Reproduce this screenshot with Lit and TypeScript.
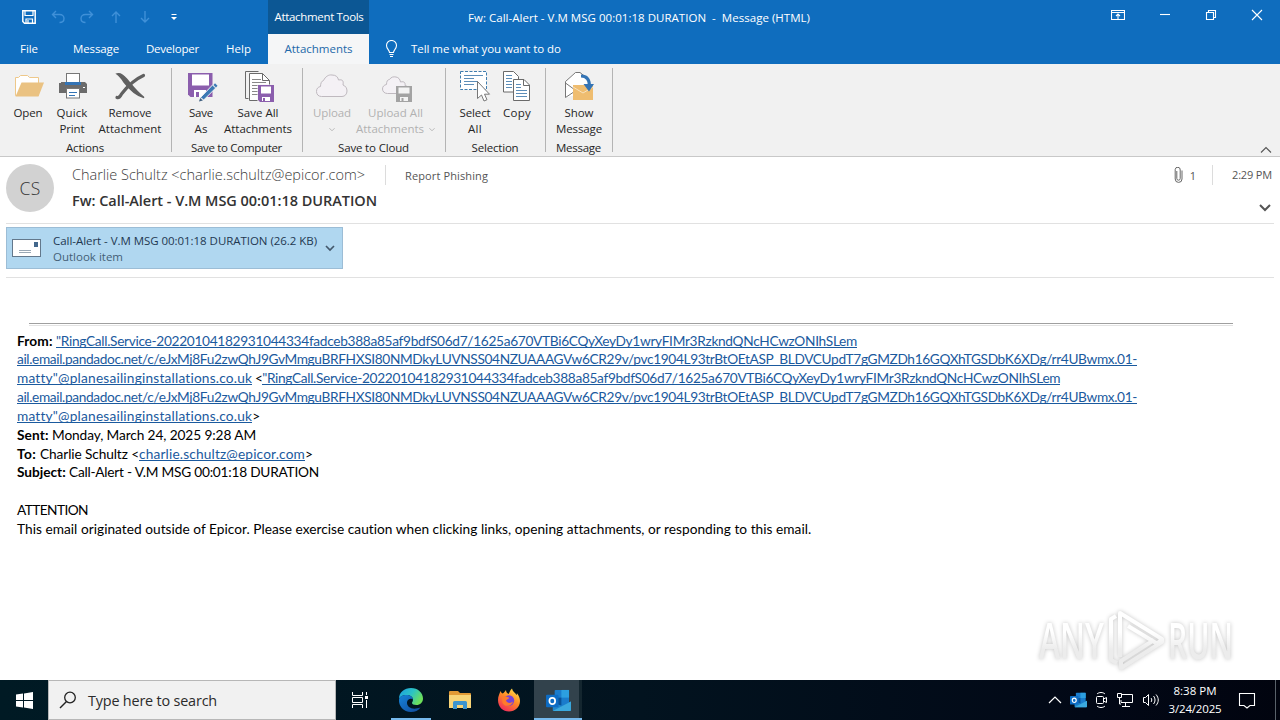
import { LitElement, css, html, svg } from 'lit';
import { customElement, property } from 'lit/decorators.js';

// One run of text, spaced out so that it takes up a known width.
@customElement('text-run')
export class TextRun extends LitElement {
    @property({ type: Number }) w = 0;

    firstUpdated() {
        const run = this.renderRoot.querySelector('.run') as HTMLElement;
        const count = (this.textContent || '').length;
        if (!this.w || !count) return;
        const natural = run.getBoundingClientRect().width;
        run.style.letterSpacing = `${(this.w - natural) / count}px`;
    }

    render() {
        return html`<span class="run"><slot></slot></span>`;
    }

    static styles = css`
    :host {
      display: inline-block;
      white-space: pre;
    }
    .run {
      display: inline-block;
    }
  `;
}

const page = (x: number, y: number) => svg`
  <path d="M${x} ${y}h13l7 7v20h-20z" fill="#fff" stroke="#6a6a6a"/>
  <path d="M${x + 13} ${y}v7h7" fill="none" stroke="#6a6a6a"/>`;

// Ribbon icons share the coordinates of the ribbon they sit in.
const ribbonIcons: Record<string, unknown> = {
    open: svg`
      <path d="M15.500 95.500v-18h3l2-2h7l2 2h9v18z" fill="#fff" stroke="#eec88a"/>
      <path d="M15.500 96.500l6-14h22.500l-5.500 14z" fill="#eac282"/>`,
    print: svg`
      <path d="M61 83v-1h24l2 2v9h-28v-10z" fill="#6b6b6b"/>
      <rect x="66.500" y="73.500" width="13" height="10" fill="#fff" stroke="#777"/>
      <path d="M65 83.500h16" stroke="#3474b5" stroke-width="3"/>
      <rect x="66.500" y="88.500" width="13" height="9.500" fill="#fff" stroke="#777"/>
      <path d="M69 92.500h8M69 95.500h6" stroke="#3474b5"/>
      <path d="M83 87.500h2" stroke="#fff"/>`,
    remove: svg`
      <path d="M117 74c4-1.500 7 2 9.500 5 5 6 10 13 17.500 18.500-8-2-15-9-20-15.500-2-3-4-6-7-8z" fill="#606060" stroke="#606060" stroke-width="1.500"/>
      <path d="M143.500 75.500c-9 4-17 12-22 18.500-1 2-3 4-4.500 3.500" fill="none" stroke="#606060" stroke-width="3.200" stroke-linecap="round"/>`,
    saveAs: svg`
      <path d="M188 73h24.500v24h-22l-2.500-2.500z" fill="#8b5ead"/>
      <rect x="192" y="74.500" width="17" height="11" fill="#fff"/>
      <rect x="194" y="90" width="12" height="7" fill="#fff"/>
      <rect x="196" y="92" width="3" height="5" fill="#8b5ead"/>
      <path d="M200.500 97.500l12-12.500 3.200 3-12 12z" fill="#3c79b4" stroke="#f1f1f1"/>
      <path d="M213.500 85l1.500-1.700 2.500 2.500-1.500 1.700z" fill="#3c79b4"/>
      <path d="M199 101.500l1.200-3.500 2.700 2.500z" fill="#3f5f80"/>`,
    saveAll: svg`
      <path d="M245.500 71.500h13M245.500 71.500v27h3" fill="none" stroke="#6a6a6a"/>
      ${page(249.5, 73.5)}
      <path d="M252 79.500h9M252 82.500h14M252 85.500h14M252 88.500h7M252 91.500h7M252 94.500h7" stroke="#888"/>
      <rect x="257.500" y="84.500" width="17" height="18" fill="#f1f1f1"/>
      <path d="M258 85h16v17h-14l-2-2z" fill="#8b5ead"/>
      <rect x="261" y="86.500" width="10" height="7" fill="#fff"/>
      <rect x="262" y="97" width="8" height="4" fill="#fff"/>
      <rect x="263" y="98" width="2" height="3" fill="#8b5ead"/>`,
    upload: svg`
      <path d="M321.500 96.500c-3 0-5-2-5-5 0-3 1.500-4.500 4-5 0-3 1-5.500 3-6 2-4 5-6 8.500-5.500 4 0 6 2 6.500 5 5-1 5 2 4.500 5 2.500 1 4 3 4 6 0 3-2 5.500-5 5.500z" fill="#f4f1f5" stroke="#bfb9bf"/>`,
    uploadAll: svg`
      <path d="M387.500 93.500c-3 0-5-2-5-4.500s1.500-4 4-4.500c0-3 1-5 3-5 1.500-2.500 4-3 6.500-2.500s4 2 4.500 5c4-1 5 1 4.500 3.500 3 1 4 2 4 5 0 2-1 3-2 3z" fill="#f4f1f5" stroke="#bfb9bf"/>
      <path d="M396 86h16v16h-16z" fill="#a3a3a3"/>
      <path d="M398.500 87.500h11v6h-11z" fill="#f4f4f4"/>
      <path d="M400 97h8v4h-8z" fill="#f4f4f4"/>
      <path d="M401.500 98h2v3h-2z" fill="#a3a3a3"/>`,
    select: svg`
      <rect x="460.500" y="71.500" width="26" height="18" fill="#fff" stroke="#3f7cae" stroke-dasharray="3 1.500"/>
      <path d="M464 75.500h19M464 78.500h10M464 81.500h14M464 84.500h10" stroke="#5c8db8"/>
      <path d="M477.500 81.500v17l4-3.500 2.500 6 3-1.300-2.500-5.500h5z" fill="#fff" stroke="#777"/>`,
    copy: svg`
      <path d="M503.500 71.500h10l5 5v15.500h-15z" fill="#fff" stroke="#6a6a6a"/>
      <path d="M506 75.500h6M506 78.500h6M506 81.500h6M506 84.500h6M506 87.500h6" stroke="#5c8db8"/>
      <path d="M513.500 79.500h10.500l5.500 5.500v15.500h-16z" fill="#fff" stroke="#6a6a6a"/>
      <path d="M523.500 79.500v6h6" fill="none" stroke="#6a6a6a"/>
      <path d="M516 84.500h5M516 87.500h5M516 90.500h11M516 93.500h11M516 96.500h11" stroke="#5c8db8"/>`,
    show: svg`
      <path d="M565.500 97.500v-16l8.500-8.500 5-0.500 8 8v12z" fill="#fff"/>
      <path d="M573 92.500l-7.500 5v-16l10-9 4.500 0 5 4M565.500 83l7.500 5.500" fill="none" stroke="#777"/>
      <rect x="573" y="85" width="20" height="15" fill="#efbd70"/>
      <path d="M573 87l10 6 10-6" fill="none" stroke="#f8e2bd"/>
      <path d="M581 76c6 0 8.500 4 8.500 10" fill="none" stroke="#3474b5" stroke-width="3"/>
      <path d="M583.500 84h10.500l-5 7.500z" fill="#3474b5"/>`,
};

interface Command {
    icon: string;
    x: number;
    width: number;
    lines: [string, number][];
    disabled?: boolean;
    arrow?: boolean;
}

interface Group {
    name: string;
    nameWidth: number;
    width: number;
    pad: number;
    commands: Command[];
}

const groups: Group[] = [
    {
        name: 'Actions', nameWidth: 38, width: 172, pad: 6,
        commands: [
            { icon: 'open', x: 6, width: 44, lines: [['Open', 29]] },
            { icon: 'print', x: 50, width: 44, lines: [['Quick', 31], ['Print', 25]] },
            { icon: 'remove', x: 94, width: 72, lines: [['Remove', 43], ['Attachment', 63]] },
        ],
    },
    {
        name: 'Save to Computer', nameWidth: 91, width: 131, pad: 7,
        commands: [
            { icon: 'saveAs', x: 179, width: 44, lines: [['Save', 24], ['As', 13]] },
            { icon: 'saveAll', x: 223, width: 70, lines: [['Save All', 41], ['Attachments', 68]] },
        ],
    },
    {
        name: 'Save to Cloud', nameWidth: 71, width: 143, pad: 7,
        commands: [
            { icon: 'upload', x: 310, width: 44, lines: [['Upload', 38], ['', 0]], disabled: true, arrow: true },
            { icon: 'uploadAll', x: 354, width: 83, lines: [['Upload All', 55], ['Attachments', 68]], disabled: true, arrow: true },
        ],
    },
    {
        name: 'Selection', nameWidth: 47, width: 100, pad: 7,
        commands: [
            { icon: 'select', x: 453, width: 44, lines: [['Select', 31], ['All', 14]] },
            { icon: 'copy', x: 497, width: 40, lines: [['Copy', 28]] },
        ],
    },
    {
        name: 'Message', nameWidth: 45, width: 67, pad: 7,
        commands: [
            { icon: 'show', x: 553, width: 52, lines: [['Show', 29], ['Message', 46]] },
        ],
    },
];

const arrow = html`<svg class="arrow" width="6" height="5" viewBox="0 0 7 5"><path d="M.5 1l3 3 3-3" fill="none" stroke="currentColor"/></svg>`;

const outlook = svg`
  <rect x="9" y="1" width="15" height="17" rx="1" fill="#1a7ccc"/>
  <path d="M16 1h8v8h-8z" fill="#2c9fe0"/>
  <path d="M9 9h7v8H9z" fill="#0a5398"/>
  <path d="M7 13l9 5 10-5v9a1 1 0 0 1-1 1H8a1 1 0 0 1-1-1z" fill="#1f86cc"/>
  <path d="M7 23l19-10v9a1 1 0 0 1-1 1z" fill="#3ba9de"/>
  <rect x="0" y="6" width="13" height="13" rx="1" fill="#0d6cc4"/>
  <ellipse cx="6.500" cy="12.500" rx="3" ry="3.300" fill="none" stroke="#fff" stroke-width="1.800"/>`;

@customElement('mail-ribbon')
export class MailRibbon extends LitElement {
    renderCommand(c: Command) {
        return html`
      <div class="command ${c.disabled ? 'disabled' : ''}" style="width:${c.width}px">
        <svg class="icon" width="${c.width}" height="34" viewBox="${c.x} 70 ${c.width} 34">${ribbonIcons[c.icon]}</svg>
        ${c.lines.map(([text, w], i) => html`
          <div class="line">
            ${text ? html`<text-run w="${w}">${text}</text-run>` : ''}
            ${c.arrow && i === 1 ? arrow : ''}
          </div>`)}
      </div>`;
    }

    render() {
        return html`
      ${groups.map((g) => html`
        <div class="group" style="width:${g.width}px">
          <div class="commands" style="padding-left:${g.pad}px">${g.commands.map((c) => this.renderCommand(c))}</div>
          <div class="name"><text-run w="${g.nameWidth}">${g.name}</text-run></div>
        </div>`)}
      <svg class="collapse" width="12" height="8" viewBox="0 0 12 8"><path d="M1 6.500l5-5 5 5" fill="none" stroke="#555" stroke-width="1.100"/></svg>
    `;
    }

    static styles = css`
    :host {
      display: flex;
      box-sizing: border-box;
      height: 93px;
      padding-top: 4px;
      background: #f1f1f1;
      border-bottom: 1px solid #c8c8c8;
      color: #262626;
      font-size: 11.5px;
    }
    .group {
      box-sizing: border-box;
      height: 84px;
      border-right: 1px solid #b4b4b4;
      display: flex;
      flex-direction: column;
    }
    .commands {
      display: flex;
      flex: none;
      height: 72px;
      padding-top: 2px;
      box-sizing: border-box;
    }
    .command {
      display: flex;
      flex-direction: column;
      align-items: center;
    }
    .icon {
      flex: none;
      margin-bottom: 1px;
    }
    .line {
      display: flex;
      align-items: center;
      gap: 5px;
      height: 16px;
      line-height: 16px;
    }
    .disabled {
      color: #b1b1b1;
    }
    .name {
      flex: none;
      text-align: center;
      line-height: 16px;
      padding-right: 1px;
    }
    .collapse {
      margin: 78px 8px 0 auto;
    }
  `;
}

@customElement('task-bar')
export class TaskBar extends LitElement {
    render() {
        return html`
      <div class="start">
        <svg width="17" height="17" viewBox="0 0 17 17"><path d="M0 2.500l7-1v6.500H0zM8 1.400L17 0v8H8zM0 9h7v6.500l-7-1zM8 9h9v8l-9-1.400z" fill="#fff"/></svg>
      </div>
      <div class="search">
        <svg width="18" height="18" viewBox="0 0 18 18"><circle cx="11" cy="6.500" r="5.300" fill="none" stroke="#222" stroke-width="1.300"/><path d="M7.500 10.500L1 17" stroke="#222" stroke-width="1.400"/></svg>
        <text-run w="129">Type here to search</text-run>
      </div>
      <div class="app view">
        <svg width="18" height="18" viewBox="0 0 18 18" fill="none" stroke="#fff"><path d="M1.500 1v3.500h10V1M1.500 17v-3.500h10V17M1.500 6.500h10v5h-10zM15.500 1v3M15.500 9v8"/><path d="M14 6.500h3" stroke-width="3"/></svg>
      </div>
      <div class="app running">
        <svg width="26" height="26" viewBox="0 0 26 26">
          <defs>
            <linearGradient id="edge" x1="0" x2="1" y1="0" y2=".5"><stop offset="0" stop-color="#1b9de2"/><stop offset=".55" stop-color="#2cc3c4"/><stop offset="1" stop-color="#6de05a"/></linearGradient>
            <linearGradient id="deep" x1="0" x2="1" y1="0" y2="1"><stop offset="0" stop-color="#1683d8"/><stop offset="1" stop-color="#114a9c"/></linearGradient>
          </defs>
          <path d="M1 12C1 5 6.500 1 13 1c7 0 12 5 12 10.500 0 4-3 6.500-6.500 6.500-3 0-4.500-1-4.500-2s1-1.500 1-3.500c0-2.500-3-4.500-6.500-4.500S2 9.500 1 12z" fill="url(#edge)"/>
          <path d="M1 12.500C2 9 5 8 8.500 8 12 8 15 10 15 12.500c-1-1.500-6-1-6 3.500 0 4 5 7.500 13.500 4.500C20.500 23.500 17 25 13 25 5.500 25 .5 19 1 12.500z" fill="url(#deep)"/>
        </svg>
      </div>
      <div class="app">
        <svg width="22" height="20" viewBox="0 0 22 20"><path d="M0 2a1 1 0 0 1 1-1h8l2 2h10a1 1 0 0 1 1 1v14H0z" fill="#e29a35"/><path d="M0 5h22v13H0z" fill="#f8d477"/><path d="M4 19v-6.500a1.500 1.500 0 0 1 1.500-1.500h11a1.500 1.500 0 0 1 1.500 1.500V19h-4v-4H8v4z" fill="#3c94cf"/></svg>
      </div>
      <div class="app">
        <svg width="24" height="24" viewBox="0 0 24 24">
          <defs><linearGradient id="fox" x1=".8" x2=".2" y1="0" y2="1"><stop offset="0" stop-color="#ffe14a"/><stop offset=".45" stop-color="#ff8a26"/><stop offset="1" stop-color="#f0245f"/></linearGradient></defs>
          <path d="M1 12C1 8 2.500 6 3.500 3c.5 1 1 2 2 2.500C7 5 8 3 9 2c0 2 1 3 2.500 4C13 4 13 2 15 .5c.5 3 3 4 4.500 6.500.5-.5.500-1 .3-2C22 8 23 10 23 13c0 6-5 10.500-11 10.500S1 19 1 12z" fill="url(#fox)"/>
          <circle cx="12" cy="12.500" r="5.200" fill="#7543d8"/>
          <path d="M5 9c3-2 5 0 7 .5 1 1.500-2 1.500-3 3 1 3 5 3 7 1-1 5-8 6-10.500 1.500z" fill="#ff7b2c"/>
        </svg>
      </div>
      <div class="app running active"><svg width="25" height="23" viewBox="0 0 26 24">${outlook}</svg></div>
      <div class="tray">
        <svg width="14" height="8" viewBox="0 0 14 8"><path d="M1 7l6-6 6 6" fill="none" stroke="#fff" stroke-width="1.200"/></svg>
        <svg width="17" height="16" viewBox="0 0 26 24">${outlook}</svg>
        <svg width="14" height="18" viewBox="0 0 14 18" fill="none" stroke="#fff"><rect x="1.500" y="5.500" width="7" height="7" rx="1"/><path d="M8.500 8l3-1.500v5l-3-1.500M2 3c2-2 6-2 8 0M2 15c2 2 6 2 8 0"/></svg>
        <svg width="18" height="16" viewBox="0 0 18 16" fill="none" stroke="#fff"><path d="M6 2.500h10.500v8H5V8M9.500 10.500v4M6 14.500h8"/><path d="M1.500 1.500h4v4h-4zM3.500 5.500V12H5"/></svg>
        <svg width="18" height="16" viewBox="0 0 18 16" fill="none" stroke="#fff"><path d="M1.500 5.500h2l3-3v11l-3-3h-2zM9 6c1 1 1 3 0 4M11.500 4c2 2.500 2 5.500 0 8M14 2.500c3 3.500 3 7.500 0 11"/></svg>
      </div>
      <div class="clock">
        <text-run w="43">8:38 PM</text-run>
        <text-run w="53">3/24/2025</text-run>
      </div>
      <svg class="notes" width="18" height="17" viewBox="0 0 18 17"><path d="M1.500 1.500h15v12H12l-3 2.500-3-2.500H1.500z" fill="none" stroke="#fff" stroke-width="1.100"/></svg>
      <div class="desktop"></div>
    `;
    }

    static styles = css`
    :host {
      display: flex;
      height: 40px;
      background: linear-gradient(90deg, #001a24, #02131f 50%, #020816 85%, #01040f);
      color: #fff;
    }
    .start {
      width: 48px;
      display: grid;
      place-items: center;
    }
    .search {
      box-sizing: border-box;
      width: 288px;
      display: flex;
      align-items: center;
      gap: 11px;
      padding-left: 10px;
      background: #f1f1f1;
      border: 1px solid #b7b7b7;
      color: #2b2b2b;
      font-size: 14.4px;
    }
    .app {
      box-sizing: border-box;
      width: 49px;
      display: grid;
      place-items: center;
    }
    .view {
      width: 50px;
      padding-right: 2px;
    }
    .running {
      background: linear-gradient(#76b9ed, #76b9ed) center bottom / 40px 2px no-repeat;
    }
    .active {
      width: 48px;
      margin-left: 1px;
      background: linear-gradient(#76b9ed, #76b9ed) center bottom / 48px 2px no-repeat,
        linear-gradient(90deg, #32424c 45px, #14262f 45px);
    }
    .tray {
      display: flex;
      align-items: center;
      gap: 7.7px;
      margin-left: auto;
    }
    .clock {
      width: 70px;
      display: flex;
      flex-direction: column;
      align-items: center;
      padding-top: 2px;
      font-size: 11.5px;
      line-height: 18px;
    }
    .notes {
      margin: 12px 0 0 8px;
    }
    .desktop {
      margin-left: 19px;
      width: 4px;
      border-left: 1px solid #59616a;
    }
  `;
}

const service = '"RingCall.Service-20220104182931044334fadceb388a85af9bdfS06d7/1625a670VTBi6CQyXeyDy1wryFIMr3RzkndQNcHCwzONIhSLem';
const route = 'ail.email.pandadoc.net/c/eJxMj8Fu2zwQhJ9GvMmguBRFHXSI80NMDkyLUVNSS04NZUAAAGVw6CR29v/pvc1904L93trBtOEtASP_BLDVCUpdT7gGMZDh16GQXhTGSDbK6XDg/rr4UBwmx.01-';
const matty = 'matty"@planesailinginstallations.co.uk';

@customElement('app-root')
export class AppRoot extends LitElement {
    render() {
        return html`
      <header class="titlebar">
        <div class="quick">
          <svg width="14" height="14" viewBox="0 0 14 14"><path d="M.8.8h12.400v12.400H2.500L.8 11.500z" fill="none" stroke="#fff" stroke-width="1.500"/><path d="M3 1v4.500h8V1M4 13V9h6.500v4M6 10v3" fill="none" stroke="#fff" stroke-width="1.200"/></svg>
          <svg class="dim" width="14" height="14" viewBox="0 0 14 14"><path d="M5 1L1.500 4.500 5 8M2 4.500h6.500c3 0 4.500 2 4.500 4s-1.500 4-4.500 4"/></svg>
          <svg class="dim" width="14" height="14" viewBox="0 0 14 14"><path d="M9 1l3.500 3.500L9 8M12 4.500H5.500C2.500 4.500 1 6.500 1 8.500s1.500 4 4.500 4"/></svg>
          <svg class="dim" width="14" height="14" viewBox="0 0 14 14"><path d="M7 13V2M3 6l4-4 4 4"/></svg>
          <svg class="dim" width="14" height="14" viewBox="0 0 14 14"><path d="M7 1v11M3 8l4 4 4-4"/></svg>
          <svg width="14" height="14" viewBox="0 0 14 14"><path d="M4.500 4.500h5" stroke="#fff"/><path d="M4 7h6l-3 3z" fill="#fff"/></svg>
        </div>
        <div class="tools"><text-run w="89">Attachment Tools</text-run></div>
        <div class="caption"><text-run w="342">Fw: Call-Alert - V.M MSG 00:01:18 DURATION  -  Message (HTML)</text-run></div>
        <div class="window">
          <svg width="14" height="12" viewBox="0 0 14 12"><path d="M.5 1.500h13v9H.500zM.5 3.500h13M7 10V5M5 7l2-2 2 2"/></svg>
          <svg width="12" height="12" viewBox="0 0 12 12"><path d="M1 5.500h10"/></svg>
          <svg width="12" height="12" viewBox="0 0 12 12"><path d="M1.500 3.500h7v7h-7zM3.500 3V1.500h7v7H9"/></svg>
          <svg width="12" height="12" viewBox="0 0 12 12"><path d="M1 1l10 10M11 1L1 11"/></svg>
        </div>
      </header>
      <nav class="tabs">
        <div class="tab file"><text-run w="18">File</text-run></div>
        <div class="tab message"><text-run w="46">Message</text-run></div>
        <div class="tab developer"><text-run w="53">Developer</text-run></div>
        <div class="tab help"><text-run w="25">Help</text-run></div>
        <div class="tab selected"><text-run w="68">Attachments</text-run></div>
        <svg class="bulb" width="13" height="18" viewBox="0 0 13 18"><path d="M4.500 12.500c0-2.500-3-3.500-3-7a5 5 0 0 1 10 0c0 3.500-3 4.500-3 7zM4.500 14.500h4M5 16.500h3" fill="none" stroke="#fff" stroke-width="1.100"/></svg>
        <div class="tab"><text-run w="150">Tell me what you want to do</text-run></div>
      </nav>
      <mail-ribbon></mail-ribbon>
      <section class="head">
        <div class="avatar"><text-run w="21">CS</text-run></div>
        <div class="who">
          <div class="sender">
            <text-run class="address" w="293">Charlie Schultz &lt;charlie.schultz@epicor.com&gt;</text-run>
            <text-run class="report" w="83">Report Phishing</text-run>
          </div>
          <text-run class="subject" w="305">Fw: Call-Alert - V.M MSG 00:01:18 DURATION</text-run>
        </div>
        <div class="meta">
          <div class="when">
            <svg width="9" height="16" viewBox="0 0 9 16"><path d="M2.800 4v7.500a1.700 1.700 0 0 0 3.400 0V3a2.200 2.200 0 0 0-5-.5v9.500a3.300 3.300 0 0 0 6.800 0V3.500" fill="none" stroke="#666" stroke-width="1"/></svg>
            <span class="count">1</span>
            <span class="time"><text-run w="40">2:29 PM</text-run></span>
          </div>
          <svg width="12" height="8" viewBox="0 0 12 8"><path d="M1 1l5 5 5-5" fill="none" stroke="#555" stroke-width="2"/></svg>
        </div>
      </section>
      <section class="attachments">
        <div class="file-card">
          <svg class="mail" width="30" height="19" viewBox="0 0 30 19"><rect x=".5" y=".5" width="28" height="17" fill="#fff" stroke="#63788c"/><rect x="22" y="3" width="4" height="5" fill="#44688c"/><path d="M7 11.500h12M7 13.500h12" stroke="#9aa8b5"/></svg>
          <div class="file-text">
            <text-run w="264">Call-Alert - V.M MSG 00:01:18 DURATION (26.2 KB)</text-run>
            <text-run class="kind" w="70">Outlook item</text-run>
          </div>
          <svg width="10" height="7" viewBox="0 0 10 7"><path d="M1 1l4 4 4-4" fill="none" stroke="#44586c" stroke-width="1.700"/></svg>
        </div>
      </section>
      <main class="body">
        <div class="rule"></div>
        <div class="row"><b><text-run w="39">From: </text-run></b><a><text-run w="801">${service}</text-run></a></div>
        <div class="row"><a><text-run w="1120">${route}</text-run></a></div>
        <div class="row"><a><text-run w="235">${matty}</text-run></a><text-run w="10"> &lt;</text-run><a><text-run w="798">${service}</text-run></a></div>
        <div class="row"><a><text-run w="1120">${route}</text-run></a></div>
        <div class="row"><a><text-run w="235">${matty}</text-run></a><text-run w="7">&gt;</text-run></div>
        <div class="row"><b><text-run w="35">Sent: </text-run></b><text-run w="204">Monday, March 24, 2025 9:28 AM</text-run></div>
        <div class="row"><b><text-run w="23">To: </text-run></b><text-run w="99">Charlie Schultz &lt;</text-run><a><text-run w="166">charlie.schultz@epicor.com</text-run></a><text-run w="8">&gt;</text-run></div>
        <div class="row"><b><text-run w="52">Subject: </text-run></b><text-run w="250">Call-Alert - V.M MSG 00:01:18 DURATION</text-run></div>
        <div class="row"></div>
        <div class="row"><text-run w="71">ATTENTION</text-run></div>
        <div class="row"><text-run w="794">This email originated outside of Epicor. Please exercise caution when clicking links, opening attachments, or responding to this email.</text-run></div>
        <svg class="watermark" width="220" height="72" viewBox="0 0 220 72">
          <defs>
            <linearGradient id="fade" gradientUnits="userSpaceOnUse" x1="0" x2="0" y1="8" y2="66"><stop offset=".35" stop-color="#fff"/><stop offset=".65" stop-color="#ececec"/></linearGradient>
          </defs>
          <text x="5" y="55" textLength="65" lengthAdjust="spacingAndGlyphs">ANY</text>
          <path d="M82 12l-5 3v41l6 3M86 53V9l42 26-5 5M128 35v3L87 64v-7l33-21M94 22l28 17"/>
          <text x="134" y="55" textLength="65" lengthAdjust="spacingAndGlyphs">RUN</text>
        </svg>
      </main>
      <task-bar></task-bar>
    `;
    }

    static styles = css`
    :host {
      display: flex;
      flex-direction: column;
      width: 1280px;
      height: 720px;
      overflow: hidden;
      background: #fff;
      font-family: "Open Sans", "Noto Sans", sans-serif;
      font-size: 11.5px;
    }
    .titlebar {
      display: flex;
      height: 34px;
      flex: none;
      background: #0f6dbe;
      color: #fff;
    }
    .quick {
      box-sizing: border-box;
      width: 268px;
      display: flex;
      align-items: center;
      gap: 15px;
      padding-left: 22px;
    }
    .dim {
      fill: none;
      stroke: #3f90d8;
      stroke-width: 1.4;
    }
    .tools {
      width: 101px;
      display: grid;
      place-items: center;
      background: #0c5794;
      padding: 0 0 2px 1px;
      box-sizing: border-box;
    }
    .caption {
      padding: 9px 0 0 99px;
      line-height: 17px;
    }
    .window {
      display: flex;
      gap: 34px;
      margin: 9px 17px 0 auto;
      fill: none;
      stroke: #fff;
      stroke-width: 1.1;
    }
    .tabs {
      display: flex;
      align-items: center;
      height: 30px;
      flex: none;
      background: #0f6dbe;
      color: #fff;
    }
    .tab {
      height: 30px;
      line-height: 30px;
    }
    .file {
      padding: 0 35px 0 20px;
    }
    .message {
      padding-right: 27px;
    }
    .developer {
      padding-right: 27px;
    }
    .help {
      padding-right: 17px;
    }
    .selected {
      width: 101px;
      text-align: center;
      background: #f5f6f7;
      color: #2368a9;
    }
    .bulb {
      margin: 0 13px 0 16px;
    }
    mail-ribbon {
      flex: none;
    }
    .head {
      display: flex;
      box-sizing: border-box;
      height: 67px;
      flex: none;
      margin: 0 6px;
      padding-top: 7px;
      border-bottom: 1px solid #e1e1e1;
      color: #555;
    }
    .avatar {
      width: 48px;
      height: 48px;
      display: grid;
      place-items: center;
      border-radius: 50%;
      background: #d2d2d2;
      color: #333;
      font-size: 17.5px;
      font-weight: 300;
    }
    .who {
      display: flex;
      flex-direction: column;
      padding-left: 18px;
    }
    .sender {
      display: flex;
      align-items: center;
      height: 22px;
    }
    .address {
      color: #3c3c3c;
      font-size: 14.5px;
      font-weight: 300;
      line-height: 20px;
      padding-right: 20px;
      border-right: 1px solid #dcdcdc;
    }
    .report {
      padding-left: 19px;
      font-size: 11px;
    }
    .subject {
      color: #333;
      font-size: 14.5px;
      font-weight: 600;
      line-height: 20px;
      padding-top: 5px;
    }
    .meta {
      margin-left: auto;
      display: flex;
      flex-direction: column;
      align-items: flex-end;
      gap: 18px;
      padding-right: 2px;
    }
    .meta > svg {
      margin-right: 1px;
    }
    .when {
      display: flex;
      align-items: center;
      height: 22px;
      font-size: 11px;
    }
    .count {
      padding: 0 16px 0 7px;
    }
    .time {
      border-left: 1px solid #dcdcdc;
      padding-left: 19px;
      line-height: 20px;
    }
    .attachments {
      box-sizing: border-box;
      height: 54px;
      flex: none;
      margin: 0 6px;
      padding-top: 3px;
      border-bottom: 1px solid #e1e1e1;
    }
    .file-card {
      display: flex;
      align-items: center;
      box-sizing: border-box;
      width: 337px;
      height: 42px;
      padding-left: 5px;
      background: #b0d7f0;
      border: 1px solid #9cbdd6;
      color: #1f3850;
    }
    .file-text {
      display: flex;
      flex-direction: column;
      line-height: 16px;
      padding: 1px 8px 0 11px;
    }
    .kind {
      color: #445f76;
    }
    .body {
      position: relative;
      flex: 1;
      padding: 45px 17px 0;
      font-family: Lato, "Open Sans", sans-serif;
      font-size: 13.7px;
      color: #000;
    }
    .rule {
      height: 1px;
      margin: 0 30px 4.500px 12px;
      border-top: 1px solid #9f9f9f;
      border-bottom: 1px solid #e3e3e3;
    }
    .row {
      display: flex;
      height: 18.85px;
      line-height: 19px;
    }
    a {
      color: #1b5a9e;
      height: 16px;
      border-bottom: 1px solid #1b5a9e;
    }
    .watermark {
      position: absolute;
      right: 26px;
      bottom: 4px;
      overflow: visible;
      filter: drop-shadow(0 0 2px #c4c4c4);
    }
    .watermark text {
      font: 600 50px/1 "Open Sans", sans-serif;
      fill: url(#fade);
    }
    .watermark path {
      fill: none;
      stroke: url(#fade);
      stroke-width: 4;
      stroke-linejoin: round;
    }
  `;
}
